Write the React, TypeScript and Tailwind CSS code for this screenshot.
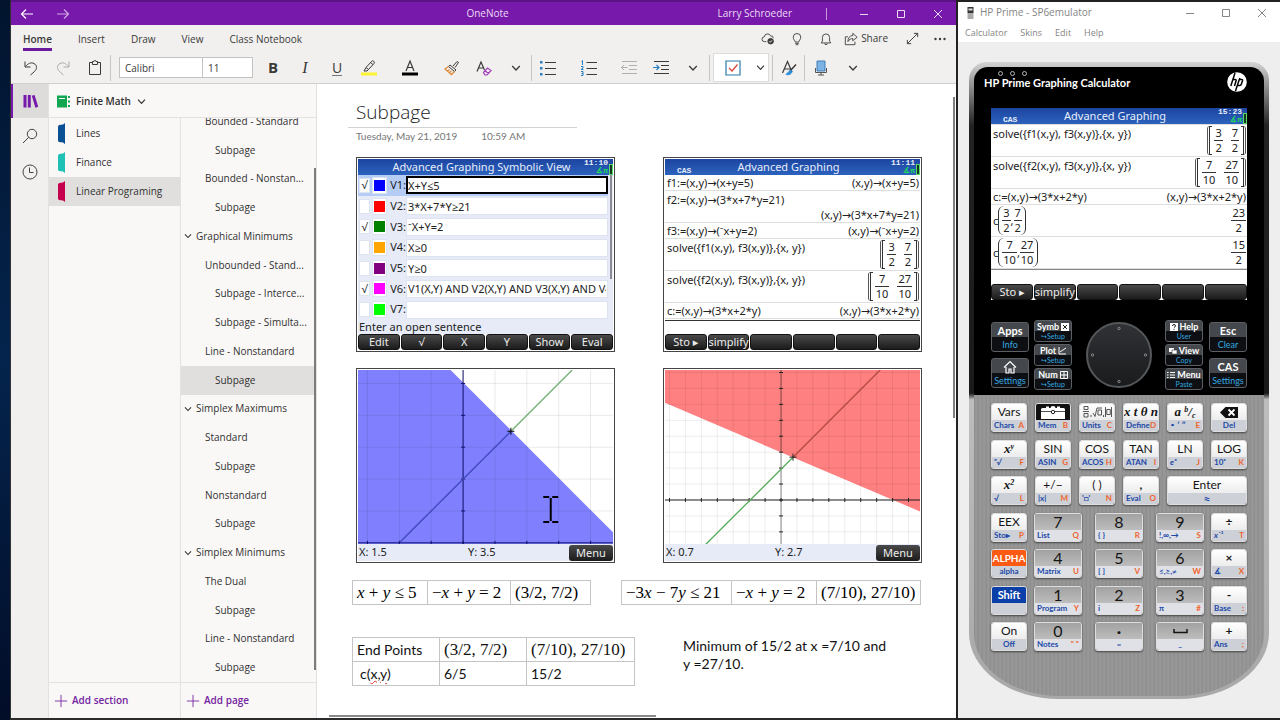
import React, { useState } from "react";

type Kids = { children?: React.ReactNode };

/* ---------- shared icons ---------- */

function Svg({ size = 16, box = 16, className = "", children }: Kids & { size?: number; box?: number; className?: string }) {
  return (
    <svg width={size} height={size} viewBox={`0 0 ${box} ${box}`} fill="none" stroke="currentColor" strokeWidth="1" className={"shrink-0 " + className} aria-hidden="true">
      {children}
    </svg>
  );
}

const Chevron = ({ size = 10 }: { size?: number }) => (
  <Svg size={size} box={10}><path d="M1.2 3l3.8 4 3.8-4" strokeWidth="1.3" /></Svg>
);

function WindowButtons({ width }: { width: string }) {
  return (
    <div className="flex">
      <button aria-label="Minimize" className={"flex h-6 items-center justify-center " + width}>
        <Svg size={10} box={10}><path d="M1 5.5h8" /></Svg>
      </button>
      <button aria-label="Maximize" className={"flex h-6 items-center justify-center " + width}>
        <Svg size={10} box={10}><path d="M1.5 1.5h7v7h-7z" /></Svg>
      </button>
      <button aria-label="Close" className={"flex h-6 items-center justify-center " + width}>
        <Svg size={10} box={10}><path d="M1 1l8 8M9 1L1 9" /></Svg>
      </button>
    </div>
  );
}

/* ---------- ribbon ---------- */

function Tool({ label, className = "", children }: Kids & { label: string; className?: string }) {
  return (
    <button aria-label={label} className={"flex h-8 w-8 shrink-0 items-center justify-center " + className}>
      {children}
    </button>
  );
}

const Rule = ({ className = "" }: { className?: string }) => <span className={"h-[26px] w-px shrink-0 bg-[#c6c6c6] " + className} />;

function Ribbon() {
  return (
    <div className="border-b border-[#cfcfcf] bg-[#f1f0ef] text-[#3b3a39]">
      <div className="flex h-[27px] items-center justify-between pl-3 text-[10px]">
        <nav className="flex gap-[26px] leading-[18px]">
          <a href="#home" className="mt-1 border-b-3 border-[#6a1a9a] font-semibold">Home</a>
          <a href="#insert" className="mt-1">Insert</a>
          <a href="#draw" className="mt-1">Draw</a>
          <a href="#view" className="mt-1">View</a>
          <a href="#class" className="mt-1">Class Notebook</a>
        </nav>
        <div className="flex items-center">
          <button aria-label="Sync status" className="flex w-[29px] justify-center">
            <Svg size={14}><path d="M6 11H4a2.700 2.700 0 01-.3-5.400A3.800 3.800 0 0111 4.500a2.500 2.500 0 013 2.500" /><circle cx="11" cy="10.500" r="3.200" fill="currentColor" /><path d="M9.500 10.500l1.100 1.200 2-2.200" stroke="#fff" /></Svg>
          </button>
          <button aria-label="Tell me" className="flex w-[29px] justify-center">
            <Svg size={14}><path d="M6 11.500c0-2-2.300-2.700-2.300-5.500a4.300 4.300 0 018.600 0c0 2.800-2.300 3.500-2.300 5.500zM6 13h4M6.500 14.500h3" /></Svg>
          </button>
          <button aria-label="Notifications" className="flex w-[29px] justify-center">
            <Svg size={14}><path d="M2.500 12.500h11l-1.400-2V6.300a4.100 4.100 0 00-8.200 0v4.200zM6.500 13a1.500 1.500 0 003 0" /></Svg>
          </button>
          <button className="flex items-center gap-[3px] pl-1">
            <Svg size={14}><path d="M4.500 5.500H1.500v9h11V11M10 1.500l5 4.500-5 4V7.500C7.500 7.500 6 8.500 4.500 11c0-4 1.500-6.500 5.500-7z" /></Svg>
            <span>Share</span>
          </button>
          <button aria-label="Full screen" className="ml-4 flex w-4 justify-center">
            <Svg size={15}><path d="M2.500 13.500l11-11M9.500 2.500h4v4M2.500 9.500v4h4" /></Svg>
          </button>
          <button aria-label="More" className="ml-1 flex w-8 justify-center">
            <Svg><g fill="currentColor" stroke="none"><circle cx="3.500" cy="8" r="1.200" /><circle cx="8" cy="8" r="1.200" /><circle cx="12.500" cy="8" r="1.200" /></g></Svg>
          </button>
        </div>
      </div>

      <div className="flex h-[31px] items-center pl-1">
        <Tool label="Undo"><Svg size={18} box={18}><path d="M3 2.500v5.500h5.500M3.500 7.500C6 4.500 9 3 12 4.500c3.500 2 3 5.500.5 8L8.500 16" /></Svg></Tool>
        <Tool label="Redo" className="text-[#a9a9a9]"><Svg size={18} box={18}><path d="M15 2.500v5.500H9.500M14.500 7.500C12 4.500 9 3 6 4.500c-3.500 2-3 5.500-.5 8L9.500 16" /></Svg></Tool>
        <Tool label="Paste"><Svg size={18} box={18}><path d="M6.500 3.500h-3v12h11v-12h-3M6.500 5.500h5v-3h-1.500a1 1 0 00-2 0H6.500z" /></Svg></Tool>
        <Rule className="-ml-px" />
        <input aria-label="Font" defaultValue="Calibri" className="ml-2 h-[21px] w-[84px] border border-[#c3c3c3] bg-white px-[5px] text-[10px]" />
        <input aria-label="Font size" defaultValue="11" className="-ml-px h-[21px] w-[51px] border border-[#c3c3c3] bg-white px-[5px] text-[10px]" />
        <Tool label="Bold" className="ml-1 text-[15px] font-bold"><span>B</span></Tool>
        <Tool label="Italic" className="font-['Liberation_Serif',serif] text-[16px] italic"><span>I</span></Tool>
        <Tool label="Underline" className="text-[14px]"><span className="border-b border-[#777] leading-[15px]">U</span></Tool>
        <Tool label="Highlight">
          <Svg size={18} box={18}><path d="M1 13.500h16v3H1z" fill="#fcf432" stroke="none" /><path d="M6 8.500L11.500 2.500a1.600 1.600 0 012.500 2L8.500 10.500zM6 8.500L4 12h3l1.500-1.500M10.500 3.500l2.500 2" /></Svg>
        </Tool>
        <Tool label="Font color" className="ml-[9px]">
          <Svg size={18} box={18}><path d="M1 13.500h16v3H1z" fill="#000" stroke="none" /><path d="M5 12L9 2l4 10M6.500 8.500h5" strokeWidth="1.200" /></Svg>
        </Tool>
        <Tool label="Format painter" className="ml-[10px]">
          <Svg><path d="M9 6l4-4.500 1.500 1L11 7.500M6 5l6 5-1.500 1.500-6-5z" /><path d="M4.500 6.500L1 9l6.500 5.500 3-3M3.500 11l2-1.500M5.500 12.500l2-1.500" stroke="#e08a3c" fill="none" strokeWidth="1.300" /></Svg>
        </Tool>
        <Tool label="Clear formatting">
          <Svg><path d="M1 11.500L5 2l3.500 8M2.500 8h4.500" strokeWidth="1.200" /><path d="M7.500 12.500l4-4.500 3.500 2.500-4 4.500H9zM9 10.800l3.500 2.700" stroke="#a03db8" strokeWidth="1.200" /></Svg>
        </Tool>
        <Tool label="More font options"><Chevron /></Tool>
        <Rule className="-ml-px" />
        <Tool label="Bullets">
          <Svg><g fill="#2a7fc0" stroke="none"><path d="M0 1h2.500v2.500H0zM0 7h2.500v2.500H0zM0 13h2.500v2.500H0z" /></g><path d="M5 2.500h11M5 8.500h11M5 14.500h11" /></Svg>
        </Tool>
        <Tool label="Numbering" className="ml-[9px]">
          <Svg><path d="M5.500 2.500H16M5.500 8.500H16M5.500 14.500H16" /><path d="M.5 1.500l1-1V5M0 6.500h2v1.500l-2 1.500h2.500M0 11.500h2v4H0M.5 13.500H2" stroke="#2a7fc0" /></Svg>
        </Tool>
        <Tool label="Decrease indent" className="ml-2 text-[#b0b0b0]">
          <Svg><path d="M1 1.500h15M8 5.500h8M8 9.500h8M1 13.500h15M6.500 7.500h-6M3 5L.5 7.500 3 10" /></Svg>
        </Tool>
        <Tool label="Increase indent">
          <Svg><path d="M1 1.500h15M8 5.500h8M8 9.500h8M1 13.500h15" /><path d="M0 7.500h6M3.500 5L6 7.500 3.500 10" stroke="#2a7fc0" strokeWidth="1.200" /></Svg>
        </Tool>
        <Tool label="More paragraph options"><Chevron /></Tool>
        <Rule />
        <div className="ml-[3px] flex h-[29px] items-center border border-[#dcdcdc] bg-white">
          <button aria-label="To do tag" className="flex h-7 w-[38px] items-center justify-center">
            <Svg><path d="M1 1h14v14H1z" stroke="#2a7ba8" strokeWidth="1.200" /><path d="M4 8l3 3 5.500-6.500" stroke="#d8453c" strokeWidth="1.300" /></Svg>
          </button>
          <button aria-label="More tags" className="flex h-7 w-4 items-center justify-center"><Chevron size={9} /></button>
        </div>
        <Rule className="ml-[3px]" />
        <Tool label="Styles">
          <Svg><path d="M1.500 13L6.500 1.500 11 12M3 9h6.500" strokeWidth="1.200" /><path d="M15 4.500L9 11" strokeWidth="1.500" /><path d="M9.500 10L5 14.500c2.500.5 5.500 0 6-3z" fill="#2d8fd8" stroke="#2d8fd8" /></Svg>
        </Tool>
        <Rule className="-ml-px" />
        <Tool label="Dictate">
          <Svg><path d="M4 1h8v10H4z" fill="#7db2e4" stroke="#3f7fb8" /><path d="M2.500 8v4.500h11V8M8 12.500V15M5 15h6" stroke="#555" /></Svg>
        </Tool>
        <Tool label="Dictate options"><Chevron /></Tool>
      </div>
    </div>
  );
}

/* ---------- navigation ---------- */

const sections = [
  { name: "Lines", fill: "#0b4f94" },
  { name: "Finance", fill: "#1fc0b6" },
  { name: "Linear Programing", fill: "#c4004f" },
];

const pages: { name: string; level: 0 | 1 | 2; current?: boolean }[] = [
  { name: "Bounded - Standard", level: 1 },
  { name: "Subpage", level: 2 },
  { name: "Bounded - Nonstan...", level: 1 },
  { name: "Subpage", level: 2 },
  { name: "Graphical Minimums", level: 0 },
  { name: "Unbounded - Stand...", level: 1 },
  { name: "Subpage - Interce...", level: 2 },
  { name: "Subpage - Simulta...", level: 2 },
  { name: "Line - Nonstandard", level: 1 },
  { name: "Subpage", level: 2, current: true },
  { name: "Simplex Maximums", level: 0 },
  { name: "Standard", level: 1 },
  { name: "Subpage", level: 2 },
  { name: "Nonstandard", level: 1 },
  { name: "Subpage", level: 2 },
  { name: "Simplex Minimums", level: 0 },
  { name: "The Dual", level: 1 },
  { name: "Subpage", level: 2 },
  { name: "Line - Nonstandard", level: 1 },
  { name: "Subpage", level: 2 },
];

const indent = ["pl-[3px]", "pl-[24px]", "pl-[34px]"];

function AddButton({ children }: Kids) {
  return (
    <button className="flex h-9 w-full shrink-0 items-center gap-1 border-t border-[#e3e2e1] pl-[5px] font-semibold text-[#7424a0]">
      <Svg size={14}><path d="M1 8h14M8 1v14" /></Svg>
      {children}
    </button>
  );
}

function Navigation() {
  return (
    <>
      <div className="flex w-[37px] shrink-0 flex-col items-stretch bg-[#f1f0ef] text-[#444]">
        <button aria-label="Notebooks" className="flex h-[34px] items-center justify-center border-l-2 border-[#7719aa] bg-[#dddcdb] text-[#7719aa]">
          <Svg><g fill="currentColor" stroke="none"><path d="M.5 2h3v12.500h-3zM4.800 2h3v12.500h-3zM8.800 2.800L11.600 2l3.600 11.800-2.800.9z" /></g></Svg>
        </button>
        <button aria-label="Search" className="flex h-9 items-center justify-center">
          <Svg><circle cx="10" cy="6" r="4.700" /><path d="M6.700 9.300L1 15" /></Svg>
        </button>
        <button aria-label="Recent notes" className="flex h-9 items-center justify-center">
          <Svg><circle cx="8" cy="8" r="7" /><path d="M7.500 3.500v5h4" /></Svg>
        </button>
      </div>
      <div className="flex w-[269px] shrink-0 flex-col border-x border-[#e3e2e1] bg-[#f9f8f7] text-[10px] text-[#323130]">
        <button className="flex h-[34px] shrink-0 items-center border-b border-[#e3e2e1] pt-0.5 pl-2 font-semibold">
          <Svg size={13} box={13}><path d="M0 .5h10v12H0z" fill="#13a650" stroke="none" /><path d="M2 3.500h6" stroke="#fff" /><path d="M11 2h2M11 6.500h2M11 11h2" stroke="#13a650" strokeWidth="2" /></Svg>
          <span className="mr-[6px] ml-[6px]">Finite Math</span>
          <Chevron size={9} />
        </button>
        <div className="flex min-h-0 flex-1">
          <div className="flex w-[132px] shrink-0 flex-col border-r border-[#e3e2e1]">
            <ul className="flex-1 pt-px">
              {sections.map((s, i) => (
                <li key={s.name}>
                  <a href={"#" + s.name} className={"flex h-[29px] items-center gap-[11px] pl-[9px] " + (i === 2 ? "bg-[#e0dfde]" : "")}>
                    <svg width="7" height="21" viewBox="0 0 7 21" aria-hidden="true"><path d="M7 0v21l-2-1.500-4-.5-1-1V3.500l1-1.500 4-.5z" fill={s.fill} /></svg>
                    {s.name}
                  </a>
                </li>
              ))}
            </ul>
            <AddButton>Add section</AddButton>
          </div>
          <div className="flex min-w-0 flex-1 flex-col">
            <div className="relative flex min-h-0 flex-1 flex-col overflow-hidden">
              <ul className="-mt-[11px] flex flex-1 flex-col">
                {pages.map((p, i) => (
                  <li key={i} className={"flex min-h-0 flex-1 " + (p.current ? "bg-[#e0dfde]" : "")}>
                    <a href={"#page" + i} className={"flex flex-1 items-center gap-1 whitespace-nowrap " + indent[p.level]}>
                      {p.level === 0 && <Chevron size={8} />}
                      <span>{p.name}</span>
                    </a>
                  </li>
                ))}
              </ul>
              <span className="absolute top-[50px] right-0 bottom-3 w-0.5 bg-[#7d7c7b]" />
            </div>
            <AddButton>Add page</AddButton>
          </div>
        </div>
      </div>
    </>
  );
}

/* ---------- calculator screens ---------- */

const screenFont = "font-['Noto_Sans','Open_Sans','DejaVu_Sans',sans-serif] text-[11px] text-[#222] ";

function Header({ title, time, cas }: { title: string; time: string; cas?: boolean }) {
  return (
    <div className="relative flex h-4 shrink-0 items-center justify-center bg-linear-to-b from-[#1d45a0] to-[#2b62bd] pr-2 text-[11px] leading-4 text-[#e8eefc]">
      {cas && <span className="absolute bottom-0 left-3 font-['Liberation_Mono',monospace] text-[8px] leading-[9px] font-bold">CAS</span>}
      <span>{title}</span>
      <div className="absolute top-0 right-0 flex items-center">
        <div className="flex flex-col items-end font-['Liberation_Mono',monospace] text-[8px] leading-2 font-bold">
          <span>{time}</span>
          <span className="text-[#1fd65b]">∡π</span>
        </div>
        <span className="mt-1 ml-px h-[11px] w-1 border border-[#59d96b] bg-[#123a1c]" />
      </div>
    </div>
  );
}

function SoftKeys({ labels }: { labels: string[] }) {
  return (
    <div className="grid h-4 shrink-0 grid-cols-6 gap-px">
      {labels.map((l, i) => (
        <button key={i} aria-label={l || "Empty soft key " + (i + 1)} className="flex items-center justify-center rounded-[3px] border border-[#111] bg-linear-to-b from-[#4a4a4a] to-[#1c1c1c] text-[11px] leading-[14px] whitespace-nowrap text-[#ececec]">
          {l}
        </button>
      ))}
    </div>
  );
}

function Frac({ n, d }: { n: string; d: string }) {
  return (
    <span className="inline-flex flex-col text-center text-[11px] leading-[14px]">
      <span className="border-b border-[#333] px-px">{n}</span>
      <span className="px-px">{d}</span>
    </span>
  );
}

function Matrix({ a, b }: { a: [string, string]; b: [string, string] }) {
  return (
    <span className="flex gap-px rounded-[3px] border-x border-[#555] px-px">
      <span className="w-[3px] border-y border-l border-[#333]" />
      <span className="flex gap-2 px-px">
        <Frac n={a[0]} d={a[1]} />
        <Frac n={b[0]} d={b[1]} />
      </span>
      <span className="w-[3px] border-y border-r border-[#333]" />
    </span>
  );
}

function Call({ a, b }: { a: [string, string]; b: [string, string] }) {
  return (
    <span className="flex items-center">
      c
      <span className="flex items-center rounded-[6px] border-x border-[#333] px-[3px]">
        <Frac n={a[0]} d={a[1]} />,<Frac n={b[0]} d={b[1]} />
      </span>
    </span>
  );
}

function Entry({ left, right, tall }: { left: React.ReactNode; right: React.ReactNode; tall?: boolean }) {
  return (
    <div className={"flex shrink-0 justify-between border-b border-[#dedede] pl-0.5 leading-[15px] " + (tall ? "h-8" : "h-4")}>
      <span className={typeof left === "string" && tall ? "pt-px" : "flex items-center"}>{left}</span>
      <span className="flex items-center pr-px">{right}</span>
    </div>
  );
}

const THREE_SEVEN = <Matrix a={["3", "2"]} b={["7", "2"]} />;
const SEVEN_TENTHS = <Matrix a={["7", "10"]} b={["27", "10"]} />;
const casKeys = ["Sto ▸", "simplify", "", "", "", ""];

function Frame({ children }: Kids) {
  return (
    <div className={screenFont + "flex h-[195px] flex-col overflow-hidden border border-[#444] bg-white p-px"}>
      {children}
    </div>
  );
}

const formulas = [
  { id: "V1", fill: "bg-[#0000ff]", value: "X+Y≤5", on: true },
  { id: "V2", fill: "bg-[#ff0000]", value: "3*X+7*Y≥21", on: false },
  { id: "V3", fill: "bg-[#008000]", value: "⁻X+Y=2", on: true },
  { id: "V4", fill: "bg-[#ffa500]", value: "X≥0", on: false },
  { id: "V5", fill: "bg-[#800080]", value: "Y≥0", on: false },
  { id: "V6", fill: "bg-[#ff00ff]", value: "V1(X,Y) AND V2(X,Y) AND V3(X,Y) AND V4(X,Y)", on: true },
  { id: "V7", fill: "bg-[#00ff00]", value: "", on: false },
];

function SymbolicView() {
  const [on, setOn] = useState(formulas.map((f) => f.on));
  return (
    <Frame>
      <Header title="Advanced Graphing Symbolic View" time="11:10" />
      <div className="relative flex min-h-0 flex-1 flex-col bg-[#e6ebf7] pr-[5px]">
        {formulas.map((f, i) => (
          <div key={f.id} className={"flex min-h-0 flex-1 items-center " + (i === 0 ? "bg-[#b5ccf7]" : "")}>
            <input
              type="checkbox"
              aria-label={"Plot " + f.id}
              checked={on[i]}
              onChange={() => setOn(on.map((v, j) => (j === i ? !v : v)))}
              className="ml-px flex h-[15px] w-[11px] shrink-0 appearance-none items-center justify-center border border-[#dde3f0] bg-white text-[11px] leading-3 checked:before:content-['√']"
            />
            <span className="ml-[2px] flex h-[17px] w-[15px] shrink-0 items-center justify-center border border-[#dde3f0] bg-white">
              <span className={"h-[11px] w-[11px] " + f.fill} />
            </span>
            <label htmlFor={f.id} className="w-[19px] shrink-0 text-right text-[11px]">{f.id}:</label>
            <input
              id={f.id}
              defaultValue={f.value}
              className={"h-[18px] min-w-0 flex-1 bg-white text-[11px] " + (i === 0 ? "border-2 border-black" : "border border-[#dde3f0] px-px")}
            />
          </div>
        ))}
        <span className="absolute top-0 right-px h-[104px] w-0.5 bg-[#8c8c94]" />
      </div>
      <p className="h-[14px] bg-[#e6ebf7] pl-px text-[11px] leading-[13px]">Enter an open sentence</p>
      <SoftKeys labels={["Edit", "√", "X", "Y", "Show", "Eval"]} />
    </Frame>
  );
}

function CasView() {
  return (
    <Frame>
      <Header title="Advanced Graphing" time="11:11" cas />
      <Entry left="f1:=(x,y)→(x+y=5)" right="(x,y)→(x+y=5)" />
      <Entry left="f2:=(x,y)→(3*x+7*y=21)" right={<span className="self-end">(x,y)→(3*x+7*y=21)</span>} tall />
      <Entry left="f3:=(x,y)→(⁻x+y=2)" right="(x,y)→(⁻x+y=2)" />
      <Entry left="solve({f1(x,y), f3(x,y)},{x, y})" right={THREE_SEVEN} tall />
      <Entry left="solve({f2(x,y), f3(x,y)},{x, y})" right={SEVEN_TENTHS} tall />
      <Entry left="c:=(x,y)→(3*x+2*y)" right="(x,y)→(3*x+2*y)" />
      <div className="mt-px flex-1 border-t border-[#333]" />
      <SoftKeys labels={casKeys} />
    </Frame>
  );
}

function GraphFooter({ x, y }: { x: string; y: string }) {
  return (
    <div className="flex flex-1 items-center justify-between bg-[#e6ebf7] pl-px text-[11px]">
      <span className="w-[109px]">X: {x}</span>
      <span className="flex-1">Y: {y}</span>
      <button className="h-4 w-[44px] rounded-[3px] bg-linear-to-b from-[#4a4a4a] to-[#1c1c1c] text-[11px] leading-4 text-[#ececec]">Menu</button>
    </div>
  );
}

const steps = (from: number, by: number, n: number) => Array.from({ length: n }, (_, i) => from + i * by);

function MaximumGraph() {
  return (
    <Frame>
      <svg viewBox="0 0 256 175" className="w-full shrink-0" role="img" aria-label="Graph of x+y≤5">
        <path d="M0 0H93L256 163V175H0z" fill="#8080ff" />
        <g stroke="#000" strokeOpacity=".09">
          {steps(9.5, 32, 8).map((x) => <path key={x} d={`M${x} 0V175`} />)}
          {steps(13.5, 32, 5).map((y) => <path key={y} d={`M0 ${y}H256`} />)}
        </g>
        <g stroke="#10106a">
          <path d="M105.500 0V175M0 173.500H256" />
          {steps(9.5, 32, 8).map((x) => <path key={x} d={`M${x} 171.500V175`} />)}
          {steps(13.5, 32, 5).map((y) => <path key={y} d={`M103.500 ${y}h4`} />)}
        </g>
        <path d="M215 0L153.500 61.500" stroke="#74b074" strokeWidth="1.400" />
        <path d="M153.500 61.500L42 173" stroke="#3f4bbd" strokeWidth="1.400" />
        <path d="M150 61.500h7M153.500 58v7" stroke="#000" />
        <path d="M186 127.500h6M195 127.500h6M186 152.500h6M195 152.500h6M193.500 128.500v23" stroke="#000" strokeWidth="2" />
      </svg>
      <GraphFooter x="1.5" y="3.5" />
    </Frame>
  );
}

function MinimumGraph() {
  return (
    <Frame>
      <svg viewBox="0 0 256 175" className="w-full shrink-0" role="img" aria-label="Graph of 3x+7y≥21">
        <path d="M0 0H256V142L0 33z" fill="#ff8080" />
        <g stroke="#000" strokeOpacity=".08">
          {steps(4.5, 16, 16).map((x) => <path key={x} d={`M${x} 0V175`} />)}
          {steps(2.5, 16, 11).map((y) => <path key={y} d={`M0 ${y}H256`} />)}
        </g>
        <path d="M116.500 0V175" stroke="#000" strokeOpacity=".45" />
        <path d="M0 130.500H256" stroke="#222" />
        <g stroke="#222">
          {steps(4.5, 16, 16).map((x) => <path key={x} d={`M${x} 128.500v4`} />)}
          {steps(2.5, 16, 11).map((y) => <path key={y} d={`M114.500 ${y}h4`} />)}
        </g>
        <path d="M216 0L128.500 87.500" stroke="#b84b40" strokeWidth="1.400" />
        <path d="M128.500 87.500L41 175" stroke="#5fae5f" strokeWidth="1.400" />
        <path d="M125 87.500h7M128.500 84v7" stroke="#222" />
      </svg>
      <GraphFooter x="0.7" y="2.7" />
    </Frame>
  );
}

/* ---------- note page ---------- */

const mathText = "font-['Liberation_Serif',serif] text-[17px]";
const cell = "border border-[#c4c4c4] ";

function MathRow({ cells, widths }: { cells: React.ReactNode[]; widths: string[] }) {
  return (
    <table className={"border-collapse whitespace-nowrap " + mathText}>
      <tbody>
        <tr className="h-6 leading-[22px]">
          {cells.map((c, i) => <td key={i} className={cell + "px-1 " + widths[i]}>{c}</td>)}
        </tr>
      </tbody>
    </table>
  );
}

function NotePage() {
  return (
    <main className="relative min-w-0 flex-1 overflow-hidden bg-white pl-[31px]">
      <div className="w-[229px] border-b border-[#d2d2d2] pt-[14px] pl-2">
        <h1 className="text-[19px] leading-[29px] font-light text-[#222]">Subpage</h1>
      </div>
      <div className="flex gap-6 pt-0.5 pl-2 font-['Lato',sans-serif] text-[10px] leading-3 text-[#767676]">
        <span>Tuesday, May 21, 2019</span>
        <span>10:59 AM</span>
      </div>

      <div className="mt-[15px] ml-2 grid grid-cols-[259px_259px] gap-x-12 gap-y-4">
        <SymbolicView />
        <CasView />
        <MaximumGraph />
        <MinimumGraph />
      </div>

      <div className="mt-[17px] ml-1 flex gap-[30px]">
        <MathRow widths={["w-[75px]", "w-[83px]", "w-[80px]"]} cells={[<><i>x</i> + <i>y</i> ≤ 5</>, <>−<i>x</i> + <i>y</i> = 2</>, "(3/2, 7/2)"]} />
        <MathRow widths={["w-[110px]", "w-[85px]", "w-[104px]"]} cells={[<>−3<i>x</i> − 7<i>y</i> ≤ 21</>, <>−<i>x</i> + <i>y</i> = 2</>, "(7/10), 27/10)"]} />
      </div>

      <div className="mt-8 ml-1 flex items-start gap-12 font-['Lato',sans-serif] text-[14px] text-[#111]">
        <table className="border-collapse whitespace-nowrap">
          <tbody>
            <tr className="h-6 leading-[22px]">
              <td className={cell + "w-[87px] px-1"}>End Points</td>
              <td className={cell + "w-[87px] px-1 " + mathText}>(3/2, 7/2)</td>
              <td className={cell + "w-[108px] px-1 " + mathText}>(7/10), 27/10)</td>
            </tr>
            <tr className="h-6 leading-[22px]">
              <td className={cell + "px-[7px]"}>c(<span className="underline decoration-[#e03030] decoration-wavy decoration-1 underline-offset-1">x,y</span>)</td>
              <td className={cell + "px-1"}>6/5</td>
              <td className={cell + "px-1"}>15/2</td>
            </tr>
          </tbody>
        </table>
        <p className="w-[210px] leading-[18px]">Minimum of 15/2 at x =7/10 and y =27/10.</p>
      </div>

      <span className="absolute top-[13px] right-px h-[321px] w-0.5 bg-[#7f7f7f]" />
      <span className="absolute bottom-px left-3 h-0.5 w-[327px] bg-[#8a8a8a]" />
    </main>
  );
}

/* ---------- calculator window ---------- */

function DarkKey({ top, sub, small }: { top: React.ReactNode; sub: string; small?: boolean }) {
  return (
    <button className={"flex w-[38px] flex-col items-center overflow-hidden rounded-[3px] border border-[#5c5f63] bg-linear-to-b from-[#44474b] from-50% to-[#0d0f12] to-50% text-white " + (small ? "h-[22px] text-[9px] leading-[11px]" : "h-[30px] text-[11px] leading-[15px]")}>
      <span className={"flex items-center gap-0.5 font-bold " + (small ? "h-[11px]" : "h-[15px]")}>{top}</span>
      <span className={"text-[#35a8e0] " + (small ? "text-[7px] leading-[9px]" : "text-[9px] leading-[13px]")}>{sub}</span>
    </button>
  );
}

function Key({ top, sub, letter, wide, tone = "light", label }: { top: React.ReactNode; sub?: React.ReactNode; letter?: string; wide?: string; tone?: "light" | "number" | "alpha" | "shift" | "black"; label?: string }) {
  const tops = {
    light: "bg-linear-to-b from-white to-[#ececec] text-[#151515] text-[12px]",
    number: "bg-linear-to-b from-[#a2a2a2] to-[#bdbdbd] text-[#151515] text-[16px]",
    alpha: "bg-[#fb5a14] text-white text-[10px] font-bold",
    shift: "bg-[#0b3fa8] text-white text-[11px] font-bold",
    black: "bg-[#111] text-white",
  };
  return (
    <button aria-label={label} className={"flex h-[29px] flex-col overflow-hidden rounded-[3px] border border-[#dedede] shadow-[0_1px_2px_#444] " + (wide ?? "w-[36px]")}>
      <span className={"flex h-4 w-full shrink-0 items-center justify-center leading-4 " + tops[tone]}>{top}</span>
      <span className={"flex w-full flex-1 items-center px-0.5 text-[8px] leading-[11px] font-bold text-[#1b49a8] " + (tone === "number" ? "bg-[#dfe1e6] " : "bg-[#cdd0d6] ") + (letter ? "justify-between" : "justify-center")}>
        <span className="whitespace-nowrap">{sub}</span>
        {letter && <span className="text-[#f0642c]">{letter}</span>}
      </span>
    </button>
  );
}

const Serif = ({ children }: Kids) => <span className="font-['Liberation_Serif',serif] text-[13px] font-bold whitespace-nowrap italic">{children}</span>;
const Up = ({ children }: Kids) => <sup className="text-[8px]">{children}</sup>;

type Digit = { top: React.ReactNode; sub: string; letter?: string; label?: string };

const space = (
  <svg width="15" height="6" viewBox="0 0 15 6" aria-hidden="true"><path d="M1 1v3.500h13V1" fill="none" stroke="#151515" strokeWidth="1.500" /></svg>
);

const rows: { left: React.ReactNode; digits: Digit[]; right: React.ReactNode }[] = [
  {
    left: <Key top="EEX" sub="Sto▸" letter="P" />,
    digits: [{ top: "7", sub: "List", letter: "Q" }, { top: "8", sub: "{ }", letter: "R" }, { top: "9", sub: "!,∞,→", letter: "S" }],
    right: <Key top={<b>÷</b>} sub={<i>x⁻¹</i>} letter="T" />,
  },
  {
    left: <Key tone="alpha" top="ALPHA" sub="alpha" />,
    digits: [{ top: "4", sub: "Matrix", letter: "U" }, { top: "5", sub: "[ ]", letter: "V" }, { top: "6", sub: "≤,≥,≠", letter: "W" }],
    right: <Key top={<b>×</b>} sub="∡" letter="X" />,
  },
  {
    left: <Key tone="shift" top="Shift" />,
    digits: [{ top: "1", sub: "Program", letter: "Y" }, { top: "2", sub: "i", letter: "Z" }, { top: "3", sub: "π", letter: "#" }],
    right: <Key top={<b>-</b>} sub="Base" letter=":" />,
  },
  {
    left: <Key top="On" sub="Off" />,
    digits: [{ top: "0", sub: "Notes", letter: "\" \"" }, { top: <b>·</b>, sub: "=" }, { top: space, sub: "_", label: "Space" }],
    right: <Key top={<b>+</b>} sub="Ans" letter=";" />,
  },
];

function Keypad() {
  return (
    <div className="flex h-[256px] flex-col justify-between pt-[8px]">
      <div className="flex justify-between">
        <Key top="Vars" sub="Chars" letter="A" />
        <Key tone="black" label="Toolbox" sub="Mem" letter="B" top={
          <svg width="24" height="14" viewBox="0 0 24 14" aria-hidden="true"><path d="M0 4.500q0-1.500 1.500-1.500H5V1.500h3V3h1.500q0-2 2.500-2t2.500 2H16V1.500h3V3h3.500Q24 3 24 4.500V14H0z" fill="#fff" /><path d="M0 6.500h10M14 6.500h10" stroke="#222" strokeWidth=".8" /><circle cx="12" cy="7" r="1.700" fill="none" stroke="#222" /></svg>
        } />
        <Key label="Templates" sub="Units" letter="C" top={
          <svg width="30" height="12" viewBox="0 0 30 12" fill="none" stroke="#444" strokeWidth=".9" aria-hidden="true"><path d="M1 5.500h6M2 .5h4v3H2zM2 7.500h4v3.500H2zM9 9v2M11 7l2 3.500L15 2h5M16 4h3.500v5H16zM21.500 9v2M23.500 1v10M29.500 1v10M24.800 3.500h3.500v5h-3.500z" /></svg>
        } />
        <Key top={<Serif>x t θ n</Serif>} sub="Define" letter="D" />
        <Key top={<Serif>a <Up>b</Up>/<sub className="text-[8px]">c</sub></Serif>} sub="∘ ′ ″" letter="E" />
        <Key label="Backspace" sub="Del" top={
          <svg width="18" height="11" viewBox="0 0 18 11" aria-hidden="true"><path d="M5.500 0H18v11H5.500L0 5.500z" fill="#111" /><path d="M8.500 2.500l6 6M14.500 2.500l-6 6" stroke="#fff" strokeWidth="1.800" /></svg>
        } />
      </div>
      <div className="flex justify-between">
        <Key top={<Serif>x<Up>y</Up></Serif>} sub={<i>ⁿ√</i>} letter="F" />
        <Key top="SIN" sub="ASIN" letter="G" />
        <Key top="COS" sub="ACOS" letter="H" />
        <Key top="TAN" sub="ATAN" letter="I" />
        <Key top="LN" sub={<i>eˣ</i>} letter="J" />
        <Key top="LOG" sub="10ˣ" letter="K" />
      </div>
      <div className="flex justify-between">
        <Key top={<Serif>x<Up>2</Up></Serif>} sub="√" letter="L" />
        <Key top="+/−" sub="|x|" letter="M" />
        <Key top="(  )" sub="'□'" letter="N" />
        <Key top={<b>,</b>} sub="Eval" letter="O" />
        <Key wide="w-[80px]" top="Enter" sub={<span className="text-[12px]">≈</span>} />
      </div>
      {rows.map((row, i) => (
        <div key={i} className="flex">
          {row.left}
          <div className="mx-[7px] flex flex-1 justify-between">
            {row.digits.map((d, j) => (
              <Key key={j} tone="number" wide="w-[48px]" top={d.top} sub={d.sub} letter={d.letter} label={d.label} />
            ))}
          </div>
          {row.right}
        </div>
      ))}
    </div>
  );
}

function Calculator() {
  return (
    <div className="mx-auto mt-5 w-[300px] overflow-hidden bg-[linear-gradient(180deg,#d4d4d4_0%,#8d8d8d_4%,#222222_10%,#1a1a1a_52%,#bdbdbd_53%,#a8a8a8_100%)] px-[5px] pt-[5px] pb-[3px] font-['Lato',sans-serif] [border-radius:18px_18px_90px_90px/18px_18px_66px_66px]">
      <div className="h-[328px] rounded-t-[14px] bg-black px-[17px]">
        <div className="flex h-[41px] items-start justify-between">
          <div className="-ml-[7px]">
            <div className="flex h-2 items-center gap-[7px] pt-1 pl-[14px]">
              {[0, 1, 2].map((n) => <span key={n} className="h-[5px] w-[5px] rounded-full border border-[#b5b5b5]" />)}
            </div>
            <p className="text-[11px] leading-4 font-bold text-white">HP Prime Graphing Calculator</p>
          </div>
          <svg width="20" height="20" viewBox="0 0 20 20" className="mt-[5px]" role="img" aria-label="hp">
            <circle cx="10" cy="10" r="9.800" fill="#fff" />
            <g fill="none" stroke="#000" strokeWidth="1.500"><path d="M8 1L3.800 14M6 7.500h2.200q1.300 0 .9 1.300L7.500 14M12.800 6L8.500 19M12.200 7.500h2.300q1.400 0 1 1.300L14.300 12.300q-.4 1.200-1.500 1.200H10.500" /></g>
          </svg>
        </div>
        <div className={screenFont + "flex h-[192px] flex-col overflow-hidden bg-white"}>
          <Header title="Advanced Graphing" time="15:23" cas />
          <div className="h-px shrink-0 bg-[#dedede]" />
          <Entry tall left="solve({f1(x,y), f3(x,y)},{x, y})" right={THREE_SEVEN} />
          <Entry tall left="solve({f2(x,y), f3(x,y)},{x, y})" right={SEVEN_TENTHS} />
          <Entry left="c:=(x,y)→(3*x+2*y)" right="(x,y)→(3*x+2*y)" />
          <Entry tall left={<Call a={["3", "2"]} b={["7", "2"]} />} right={<Frac n="23" d="2" />} />
          <Entry tall left={<Call a={["7", "10"]} b={["27", "10"]} />} right={<Frac n="15" d="2" />} />
          <div className="flex-1 border-t border-[#888]" />
          <SoftKeys labels={casKeys} />
        </div>
        <div className="mt-5 flex items-center justify-between">
          <div className="flex gap-[5px]">
            <div className="flex flex-col justify-center gap-[6px]">
              <DarkKey top="Apps" sub="Info" />
              <DarkKey sub="Settings" top={<Svg size={14} box={14}><path d="M1 7.500l6-6 6 6M3 7v6h3V9h2v4h3V7" strokeWidth="1.200" /></Svg>} />
            </div>
            <div className="flex flex-col gap-0.5">
              <DarkKey small sub="↪Setup" top={<>Symb<Svg size={8} box={8}><path d="M0 0h8v8H0z" fill="#fff" stroke="none" /><path d="M2 2l4 4M6 2L2 6" stroke="#222" /></Svg></>} />
              <DarkKey small sub="↪Setup" top={<>Plot<Svg size={8} box={8}><path d="M1 0v7h7M2 5l3-2 3-2" /></Svg></>} />
              <DarkKey small sub="↪Setup" top={<>Num<Svg size={8} box={8}><path d="M.5.5h7v7h-7zM.5 4h7M4 .5v7" /></Svg></>} />
            </div>
          </div>
          <button aria-label="Cursor pad" className="h-[66px] w-[66px] rounded-full border-2 border-[#55585b] bg-linear-to-b from-[#303235] to-[#1a1b1d] text-[#8a8a8a]">
            <Svg size={62} box={62}><circle cx="31" cy="4.500" r="1.200" /><circle cx="31" cy="57.500" r="1.200" /><circle cx="4.500" cy="31" r="1.200" /><circle cx="57.500" cy="31" r="1.200" /></Svg>
          </button>
          <div className="flex gap-[6px]">
            <div className="flex flex-col gap-0.5">
              <DarkKey small sub="User" top={<><Svg size={8} box={8}><path d="M0 0h8v8H0z" fill="#fff" stroke="none" /><path d="M2.500 3a1.500 1.500 0 113 0q0 .8-1.500 1.500M4 5.800v1" stroke="#222" /></Svg>Help</>} />
              <DarkKey small sub="Copy" top={<><Svg size={8} box={8}><path d="M0 1h5v4H0z" fill="#fff" stroke="none" /><path d="M3 3h5v4H3z" fill="#fff" stroke="#333" strokeWidth=".6" /></Svg>View</>} />
              <DarkKey small sub="Paste" top={<><Svg size={8} box={8}><path d="M0 1.500h1.500M3 1.500h5M0 4h1.500M3 4h5M0 6.500h1.500M3 6.500h5" strokeWidth="1.200" /></Svg>Menu</>} />
            </div>
            <div className="flex flex-col justify-center gap-[6px]">
              <DarkKey top="Esc" sub="Clear" />
              <DarkKey top="CAS" sub="Settings" />
            </div>
          </div>
        </div>
      </div>
      <div className="h-[301px] bg-[repeating-linear-gradient(90deg,#8f8f8f_0_1px,#979797_1px_3px,#939393_3px_4px)] px-[17px] [border-radius:0_0_86px_86px/0_0_62px_62px]">
        <Keypad />
      </div>
    </div>
  );
}

function CalculatorWindow() {
  return (
    <section className="flex w-[324px] shrink-0 flex-col overflow-hidden border-t-2 border-b-2 border-l-2 border-[#222] bg-[#eeeeee] text-[#858585]">
      <div className="bg-white">
        <header className="flex h-[21px] items-center justify-between pl-[9px]">
          <div className="flex items-center gap-[6px] text-[10px]">
            <svg width="7" height="12" viewBox="0 0 7 12" aria-hidden="true"><path d="M.5 0h6v6h-6z" fill="#333" /><path d="M.5 6h6v6h-6z" fill="#aaa" /><path d="M1.500 1.500h4v2h-4z" fill="#ddd" /></svg>
            <h2>HP Prime - SP6emulator</h2>
          </div>
          <WindowButtons width="w-9" />
        </header>
        <nav className="flex h-[19px] items-center gap-[13px] pl-[7px] text-[9px]">
          <a href="#calculator">Calculator</a>
          <a href="#skins">Skins</a>
          <a href="#edit">Edit</a>
          <a href="#help">Help</a>
        </nav>
      </div>
      <Calculator />
    </section>
  );
}

export default function App() {
  return (
    <div className="flex h-screen w-full overflow-hidden bg-[#061a38] font-['Open_Sans','Noto_Sans',sans-serif]">
      <div className="w-[11px] shrink-0 border-r border-[#333] bg-linear-to-b from-[#02142e] via-[#04244d] to-[#020d28]" />
      <section className="flex min-w-0 flex-1 flex-col border-b-2 border-[#2b2b2b]">
        <header className="flex h-[25px] shrink-0 items-center border-t-2 border-[#5c1287] bg-[#7719aa] text-[10px] text-[#ecdcf5]">
          <div className="flex flex-1 gap-5 pl-2">
            <button aria-label="Back" className="text-white"><Svg><path d="M14 8H2.500M7 3.500L2.500 8 7 12.500" strokeWidth="1.200" /></Svg></button>
            <button aria-label="Forward" className="text-[#d0a8e6]"><Svg><path d="M2 8h11.500M9 3.500L13.500 8 9 12.500" strokeWidth="1.200" /></Svg></button>
          </div>
          <span>OneNote</span>
          <div className="flex flex-1 items-center justify-end">
            <span>Larry Schroeder</span>
            <span className="mr-[18px] ml-[34px] h-3 w-px bg-[#c79ade]" />
            <WindowButtons width="w-[37px]" />
          </div>
        </header>
        <Ribbon />
        <div className="flex min-h-0 flex-1">
          <Navigation />
          <NotePage />
        </div>
      </section>
      <CalculatorWindow />
    </div>
  );
}
